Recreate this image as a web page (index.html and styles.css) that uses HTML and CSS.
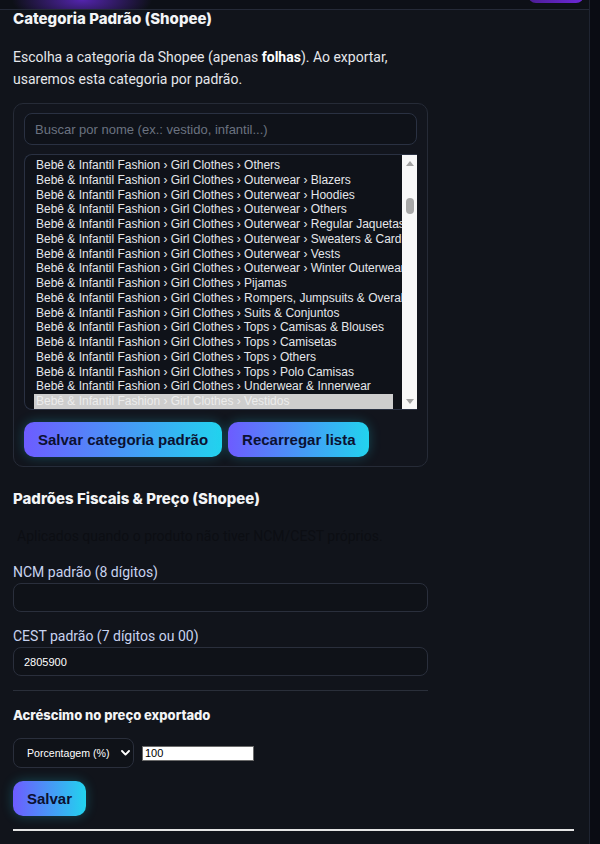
FILE: index.html
```html
<!DOCTYPE html>
<html lang="pt-BR">
<head>
<meta charset="utf-8">
<title>Configurações Shopee</title>
<link rel="stylesheet" href="styles.css">
</head>
<body>
<div class="app">
  <div class="panel">
    <header class="topbar"><span class="topbtn"></span></header>
    <main class="content">
      <section class="sec">
        <h2 class="title">Categoria Padrão (Shopee)</h2>
        <p class="lead">Escolha a categoria da Shopee (apenas <b>folhas</b>). Ao exportar, usaremos esta categoria por padrão.</p>
        <div class="card">
          <input class="search" type="text" placeholder="Buscar por nome (ex.: vestido, infantil...)">
          <div class="listbox">
            <div class="rows">
              <div class="opt">Bebê &amp; Infantil Fashion › Girl Clothes › Others</div>
              <div class="opt">Bebê &amp; Infantil Fashion › Girl Clothes › Outerwear › Blazers</div>
              <div class="opt">Bebê &amp; Infantil Fashion › Girl Clothes › Outerwear › Hoodies</div>
              <div class="opt">Bebê &amp; Infantil Fashion › Girl Clothes › Outerwear › Others</div>
              <div class="opt">Bebê &amp; Infantil Fashion › Girl Clothes › Outerwear › Regular Jaquetas</div>
              <div class="opt">Bebê &amp; Infantil Fashion › Girl Clothes › Outerwear › Sweaters &amp; Cardigans</div>
              <div class="opt">Bebê &amp; Infantil Fashion › Girl Clothes › Outerwear › Vests</div>
              <div class="opt">Bebê &amp; Infantil Fashion › Girl Clothes › Outerwear › Winter Outerwear</div>
              <div class="opt">Bebê &amp; Infantil Fashion › Girl Clothes › Pijamas</div>
              <div class="opt">Bebê &amp; Infantil Fashion › Girl Clothes › Rompers, Jumpsuits &amp; Overalls</div>
              <div class="opt">Bebê &amp; Infantil Fashion › Girl Clothes › Suits &amp; Conjuntos</div>
              <div class="opt">Bebê &amp; Infantil Fashion › Girl Clothes › Tops › Camisas &amp; Blouses</div>
              <div class="opt">Bebê &amp; Infantil Fashion › Girl Clothes › Tops › Camisetas</div>
              <div class="opt">Bebê &amp; Infantil Fashion › Girl Clothes › Tops › Others</div>
              <div class="opt">Bebê &amp; Infantil Fashion › Girl Clothes › Tops › Polo Camisas</div>
              <div class="opt">Bebê &amp; Infantil Fashion › Girl Clothes › Underwear &amp; Innerwear</div>
              <div class="opt selected">Bebê &amp; Infantil Fashion › Girl Clothes › Vestidos</div>
            </div>
            <div class="sbar">
              <span class="arrow up"></span>
              <span class="track"><span class="thumb"></span></span>
              <span class="arrow down"></span>
            </div>
          </div>
          <div class="btns">
            <button class="btn" type="button">Salvar categoria padrão</button>
            <button class="btn" type="button">Recarregar lista</button>
          </div>
        </div>
      </section>

      <section class="sec fiscal">
        <h2 class="title">Padrões Fiscais &amp; Preço (Shopee)</h2>
        <p class="faint">Aplicados quando o produto não tiver NCM/CEST próprios.</p>
        <label class="lbl">NCM padrão (8 dígitos)</label>
        <input class="field" type="text">
        <label class="lbl">CEST padrão (7 dígitos ou 00)</label>
        <input class="field" type="text" value="2805900">
        <hr class="sep">
        <h3 class="subtitle">Acréscimo no preço exportado</h3>
        <div class="pricerow">
          <div class="select">
            <span>Porcentagem (%)</span>
            <svg width="9" height="6" viewBox="0 0 9 6"><path d="M1 1 L4.5 4.6 L8 1" fill="none" stroke="#ffffff" stroke-width="1.9" stroke-linecap="round" stroke-linejoin="round"/></svg>
          </div>
          <input class="num" type="text" value="100">
        </div>
        <button class="btn save" type="button">Salvar</button>
      </section>
      <hr class="end">
    </main>
  </div>
</div>
</body>
</html>
```

FILE: styles.css
```css
html, body {
  margin: 0;
  padding: 0;
}

body {
  background: #0a0c13;
  font-family: Roboto, "Liberation Sans", sans-serif;
  color: #e5e7eb;
}

.app {
  display: flex;
  height: 844px;
  overflow: hidden;
}

.panel {
  width: 589px;
  border-right: 1px solid #1f2431;
  background: #11141b;
}

.topbar {
  height: 9px;
  border-bottom: 1px solid #252a38;
  background:
    radial-gradient(ellipse 70px 24px at 82px 0px, rgba(96, 40, 200, 0.85), rgba(96, 40, 200, 0) 100%),
    #0d1017;
  display: flex;
  justify-content: flex-end;
  padding-right: 5px;
  overflow: hidden;
}

.topbtn {
  width: 56px;
  height: 40px;
  margin-top: -37px;
  border-radius: 8px;
  background: linear-gradient(90deg, #4c1d95, #6d28d9);
}

.content {
  padding: 0 15px 0 13px;
}

.sec {
  width: 415px;
}

.title {
  margin: 0;
  font-family: Inter, "Liberation Sans", sans-serif;
  font-size: 15px;
  line-height: 18px;
  font-weight: 800;
  color: #f3f4f6;
}

.lead {
  margin: 18px 0 0;
  font-size: 14px;
  line-height: 22px;
  color: #e5e7eb;
}

.lead b {
  font-weight: 700;
  color: #ffffff;
}

.card {
  margin-top: 13px;
  border: 1px solid #262b37;
  border-radius: 10px;
  background: #12151d;
  padding: 9px 10px 9px 10px;
}

.search {
  display: block;
  box-sizing: border-box;
  width: 100%;
  height: 32px;
  margin: 0;
  padding: 0 10px;
  border: 1px solid #2a3142;
  border-radius: 8px;
  background: #0f1219;
  color: #e5e7eb;
  font: 13px "Liberation Sans", Arial, sans-serif;
  outline: none;
}

.search::placeholder {
  color: #6b7280;
}

.listbox {
  margin-top: 9px;
  height: 254px;
  border: 1px solid #2a3142;
  border-right: none;
  border-radius: 8px 0 0 8px;
  background: #0f1219;
  display: flex;
  overflow: hidden;
}

.rows {
  flex: 1;
  overflow: hidden;
  padding: 3px 0 0 9px;
}

.opt {
  width: 359px;
  padding-left: 2px;
  box-sizing: border-box;
  height: 14.75px;
  white-space: nowrap;
  font: 12px/14.75px "Liberation Sans", Arial, sans-serif;
  color: #e5e7eb;
}

.opt.selected {
  background: #cecece;
  color: #ececec;
}

.sbar {
  width: 15px;
  background: #f8f8f8;
  display: flex;
  flex-direction: column;
  align-items: center;
}

.arrow {
  width: 0;
  height: 0;
  border-left: 4.5px solid transparent;
  border-right: 4.5px solid transparent;
}

.arrow.up {
  margin-top: 6px;
  border-bottom: 5px solid #a3a3a3;
}

.arrow.down {
  margin-bottom: 5px;
  border-top: 5px solid #a3a3a3;
}

.track {
  flex: 1;
  width: 100%;
  display: flex;
  justify-content: center;
}

.thumb {
  width: 8px;
  height: 16px;
  margin-top: 32px;
  border-radius: 4px;
  background: #a8a8a8;
}

.btns {
  margin-top: 12px;
  display: flex;
  gap: 6px;
}

.btn {
  height: 35px;
  margin: 0;
  padding: 0 14px;
  border: none;
  border-radius: 10px;
  background: linear-gradient(90deg, #6d5cff 0%, #22d3ee 100%);
  color: #0b1131;
  font: 700 15px "Liberation Sans", Arial, sans-serif;
  box-shadow: 0 0 12px rgba(34, 211, 238, 0.28);
  cursor: pointer;
}

.fiscal {
  margin-top: 23px;
}

.faint {
  margin: 17px 0 0 4px;
  font-size: 14px;
  line-height: 22px;
  color: #0c0e13;
}

.lbl {
  display: block;
  margin-top: 15px;
  font-size: 14px;
  line-height: 20px;
  color: #c8d3ef;
}

.field {
  display: block;
  box-sizing: border-box;
  width: 100%;
  height: 29px;
  margin: 1px 0 0;
  padding: 0 10px;
  border: 1px solid #2a2f3c;
  border-radius: 8px;
  background: #0f1218;
  color: #ffffff;
  font: 11px "Liberation Sans", Arial, sans-serif;
  outline: none;
}

.field + .lbl {
  margin-top: 14px;
}

.sep {
  margin: 14px 0 0;
  border: none;
  border-top: 1px solid #2a2f3a;
  height: 0;
}

.subtitle {
  margin: 16px 0 0;
  font-family: Inter, "Liberation Sans", sans-serif;
  font-size: 13px;
  line-height: 16px;
  font-weight: 800;
  color: #f3f4f6;
}

.pricerow {
  margin-top: 15px;
  display: flex;
  align-items: center;
  gap: 8px;
}

.select {
  box-sizing: border-box;
  width: 121px;
  height: 30px;
  padding: 0 3px 0 13px;
  border: 1px solid #2a2f3c;
  border-radius: 8px;
  background: #0f1218;
  color: #ffffff;
  font: 10.6px "Liberation Sans", Arial, sans-serif;
  display: flex;
  align-items: center;
  justify-content: space-between;
}

.num {
  box-sizing: border-box;
  width: 112px;
  height: 15px;
  margin: 0;
  padding: 0 2px;
  border: 1px solid #6b6b6b;
  background: #ffffff;
  color: #000000;
  -webkit-text-fill-color: #000000;
  font: 11px "Liberation Sans", Arial, sans-serif;
  outline: none;
}

.save {
  margin-top: 13px;
}

.end {
  margin: 13px 0 0;
  width: 561px;
  height: 0;
  border: none;
  border-top: 2px solid #e4e4e4;
}
```
